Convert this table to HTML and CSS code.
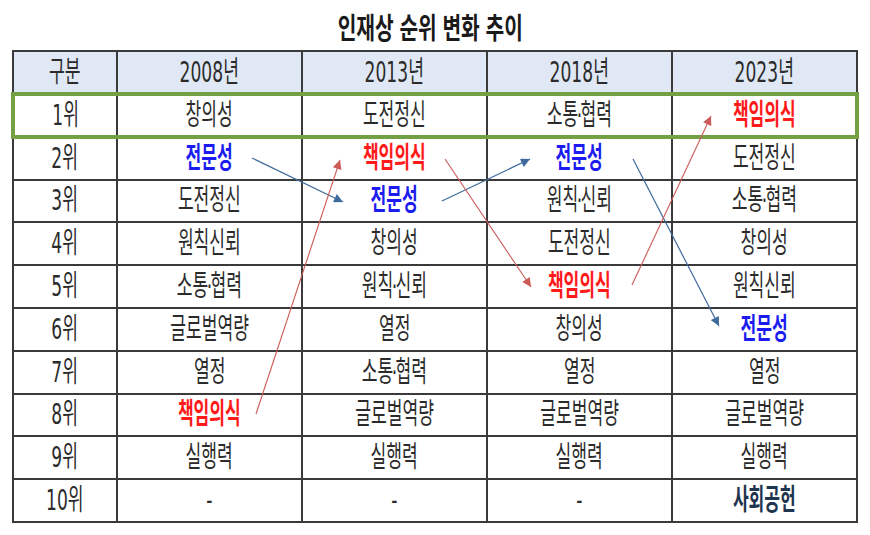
FILE: index.html
```html
<!DOCTYPE html>
<html lang="ko">
<head>
<meta charset="utf-8">
<title>인재상 순위 변화 추이</title>
<link rel="stylesheet" href="styles.css">
</head>
<body>
<div class="page">
  <h1 class="title"><span class="sq">인재상 순위 변화 추이</span></h1>
  <table class="rank">
    <colgroup>
      <col class="c0"><col class="c1"><col class="c1"><col class="c1"><col class="c1">
    </colgroup>
    <thead>
      <tr><th><span class="sq">구분</span></th><th><span class="sq">2008년</span></th><th><span class="sq">2013년</span></th><th><span class="sq">2018년</span></th><th><span class="sq">2023년</span></th></tr>
    </thead>
    <tbody>
      <tr class="top"><td><span class="sq">1위</span></td><td><span class="sq">창의성</span></td><td><span class="sq">도전정신</span></td><td><span class="sq">소통<span class="dot">·</span>협력</span></td><td><span class="sq red">책임의식</span></td></tr>
      <tr><td><span class="sq">2위</span></td><td><span class="sq blue">전문성</span></td><td><span class="sq red">책임의식</span></td><td><span class="sq blue">전문성</span></td><td><span class="sq">도전정신</span></td></tr>
      <tr><td><span class="sq">3위</span></td><td><span class="sq">도전정신</span></td><td><span class="sq blue">전문성</span></td><td><span class="sq">원칙<span class="dot">·</span>신뢰</span></td><td><span class="sq">소통<span class="dot">·</span>협력</span></td></tr>
      <tr><td><span class="sq">4위</span></td><td><span class="sq">원칙신뢰</span></td><td><span class="sq">창의성</span></td><td><span class="sq">도전정신</span></td><td><span class="sq">창의성</span></td></tr>
      <tr><td><span class="sq">5위</span></td><td><span class="sq">소통<span class="dot">·</span>협력</span></td><td><span class="sq">원칙<span class="dot">·</span>신뢰</span></td><td><span class="sq red">책임의식</span></td><td><span class="sq">원칙신뢰</span></td></tr>
      <tr><td><span class="sq">6위</span></td><td><span class="sq">글로벌역량</span></td><td><span class="sq">열정</span></td><td><span class="sq">창의성</span></td><td><span class="sq blue">전문성</span></td></tr>
      <tr><td><span class="sq">7위</span></td><td><span class="sq">열정</span></td><td><span class="sq">소통<span class="dot">·</span>협력</span></td><td><span class="sq">열정</span></td><td><span class="sq">열정</span></td></tr>
      <tr><td><span class="sq">8위</span></td><td><span class="sq red">책임의식</span></td><td><span class="sq">글로벌역량</span></td><td><span class="sq">글로벌역량</span></td><td><span class="sq">글로벌역량</span></td></tr>
      <tr><td><span class="sq">9위</span></td><td><span class="sq">실행력</span></td><td><span class="sq">실행력</span></td><td><span class="sq">실행력</span></td><td><span class="sq">실행력</span></td></tr>
      <tr><td><span class="sq">10위</span></td><td><span class="sq">-</span></td><td><span class="sq">-</span></td><td><span class="sq">-</span></td><td><span class="sq navy">사회공헌</span></td></tr>
    </tbody>
  </table>
  <svg class="arrows" width="870" height="535" viewBox="0 0 870 535">
    <defs>
      <marker id="hb" viewBox="0 0 10 10" refX="10" refY="5" markerWidth="11" markerHeight="9" markerUnits="userSpaceOnUse" orient="auto">
        <path d="M0,0 L10,5 L0,10 Z" fill="#3f6b9c"/>
      </marker>
      <marker id="hr" viewBox="0 0 10 10" refX="10" refY="5" markerWidth="11" markerHeight="9" markerUnits="userSpaceOnUse" orient="auto">
        <path d="M0,0 L10,5 L0,10 Z" fill="#cc5a57"/>
      </marker>
    </defs>
    <g class="blue-arrows">
      <line x1="252" y1="158" x2="343" y2="202" marker-end="url(#hb)"/>
      <line x1="442" y1="201" x2="530" y2="159" marker-end="url(#hb)"/>
      <line x1="633" y1="159" x2="719" y2="326" marker-end="url(#hb)"/>
    </g>
    <g class="red-arrows">
      <line x1="256" y1="414" x2="340" y2="160" marker-end="url(#hr)"/>
      <line x1="445" y1="159" x2="531" y2="287" marker-end="url(#hr)"/>
      <line x1="632" y1="285" x2="711" y2="116" marker-end="url(#hr)"/>
    </g>
  </svg>
</div>
</body>
</html>
```
FILE: styles.css
```css
html, body {
  margin: 0;
  padding: 0;
  background: #ffffff;
}
.page {
  position: relative;
  width: 870px;
  height: 535px;
  font-family: "Noto Sans CJK KR", "Noto Sans", sans-serif;
  color: #2b2b2b;
}
.title {
  margin: 0;
  height: 52px;
  display: flex;
  align-items: center;
  justify-content: center;
  padding-right: 10px;
  box-sizing: border-box;
  font-size: 29px;
  font-weight: 700;
  color: #1a1a1a;
  line-height: 1;
}
.title .sq {
  transform: scaleX(0.7);
}
.sq {
  display: inline-block;
  transform: scaleX(0.59);
  white-space: nowrap;
}
.dot {
  font-family: "DejaVu Sans", sans-serif;
  margin: 0 -0.09em;
}
.rank {
  margin-left: 11px;
  margin-top: -2px;
  width: 845px;
  table-layout: fixed;
  border-collapse: collapse;
  font-family: "DejaVu Sans", "Noto Sans CJK KR", sans-serif;
  font-size: 29px;
  line-height: 1;
}
.c0 { width: 104px; }
.c1 { width: 185px; }
.rank th,
.rank td {
  border: 2px solid #3a3a3a;
  height: 43px;
  padding: 0;
  text-align: center;
  vertical-align: middle;
  font-weight: 400;
  box-sizing: border-box;
}
.rank th {
  background: #dfe8f4;
}
.rank tbody tr td {
  height: 42.8px;
}
.rank tr.top td {
  border-top: 4px solid #72a043;
  border-bottom: 4px solid #72a043;
}
.rank tr.top td:first-child {
  border-left: 4px solid #72a043;
}
.rank tr.top td:last-child {
  border-right: 4px solid #72a043;
}
.red {
  color: #ff1a1a;
  font-weight: 700;
}
.blue {
  color: #1c1cf0;
  font-weight: 700;
}
.navy {
  color: #1f3550;
  font-weight: 700;
}
.arrows {
  position: absolute;
  left: 0;
  top: 0;
  pointer-events: none;
}
.blue-arrows line {
  stroke: #3f6b9c;
  stroke-width: 1.2;
}
.red-arrows line {
  stroke: #cc5a57;
  stroke-width: 1.1;
}
```
